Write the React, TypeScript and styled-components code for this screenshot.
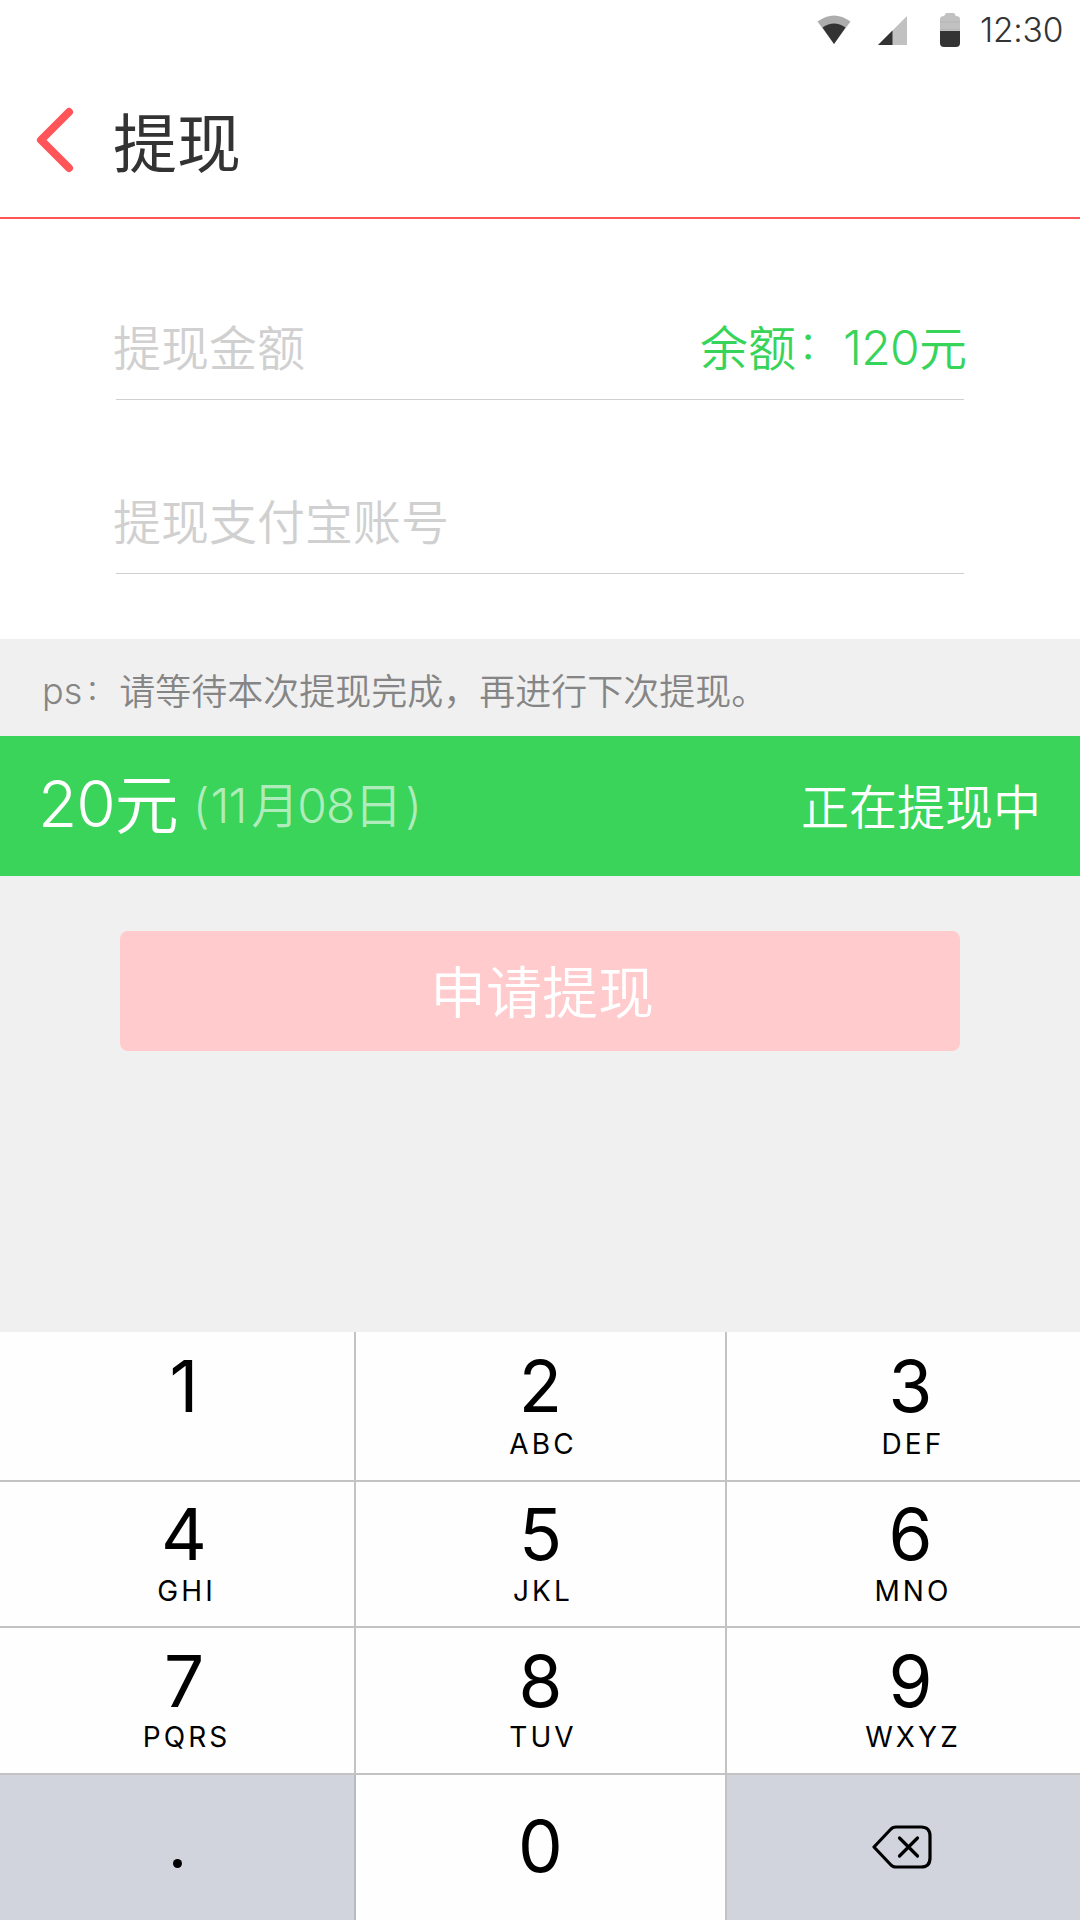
import React from "react";
import styled, { createGlobalStyle } from "styled-components";

const GlobalStyle = createGlobalStyle`
  *, *::before, *::after { box-sizing: border-box; }
  body { margin: 0; background: #fff; }
`;

const Screen = styled.main`
  display: flex;
  flex-direction: column;
  width: 1080px;
  height: 1920px;
  overflow: hidden;
  background: #f0f0f0;
  font-family: Inter, "Noto Sans CJK SC", sans-serif;
  font-weight: 350;
  white-space: nowrap;
`;

const StatusBar = styled.div`
  display: flex;
  justify-content: flex-end;
  align-items: center;
  height: 60px;
  padding-right: 16px;
  background: #fff;
`;

const StatusIcon = styled.svg<{ $gap: number }>`
  display: block;
  margin-right: ${(p) => p.$gap}px;
`;

const Clock = styled.time`
  width: 84px;
  font-size: 33.5px;
  font-weight: 360;
  line-height: 60px;
  letter-spacing: -0.2px;
  color: #333;
`;

const Header = styled.header`
  display: flex;
  height: 159px;
  padding-left: 36px;
  background: #fff;
  border-bottom: 2px solid #ff5558;
`;

const BackButton = styled.button`
  width: 77px;
  height: 66px;
  margin-top: 47px;
  padding: 0;
  border: 0;
  background: none;
`;

const BackIcon = styled.svg`
  display: block;
`;

const Title = styled.h1`
  margin: 0;
  font-size: 64px;
  font-weight: 400;
  line-height: 64px;
  padding-top: 52px;
  color: #333;
`;

const Form = styled.section`
  height: 420px;
  padding: 7px 116px 0;
  background: #fff;
`;

const Field = styled.div`
  display: flex;
  justify-content: space-between;
  height: 174px;
  padding-top: 95px;
  border-bottom: 1px solid #d0d0d0;
  font-size: 48px;
  line-height: 56px;
`;

const Placeholder = styled.span`
  margin-left: -3px;
  color: #d0d0d0;
`;

const Balance = styled.span`
  margin-right: -3px;
  color: #37d45a;
`;

const Latin = styled.span<{ $spacing?: number; $before?: number; $after?: number; $raise?: number }>`
  margin: 0 ${(p) => p.$after ?? 0}px 0 ${(p) => p.$before ?? 0}px;
  letter-spacing: ${(p) => p.$spacing ?? 0}px;
  line-height: 0;
  vertical-align: ${(p) => p.$raise ?? 0}px;
`;

const Colon = styled.span`
  margin: 0 0.185em 0 0.065em;
  font-size: 0.8em;
  line-height: 0;
  vertical-align: 0.177em;
`;

const Note = styled.p`
  height: 97px;
  margin: 0;
  padding: 0 42px;
  font-size: 36px;
  line-height: 106px;
  color: #858585;
`;

const Pending = styled.section`
  display: flex;
  align-items: center;
  height: 140px;
  padding: 0 39px 0 38px;
  background: #39d459;
  color: #fff;
`;

const Amount = styled.strong`
  font-size: 64px;
  font-weight: 350;
  line-height: 136px;
  padding-bottom: 2px;
`;

const DateText = styled.span`
  flex: 1;
  margin-left: 14px;
  font-size: 48px;
  line-height: 140px;
  color: rgba(255, 255, 255, 0.6);
`;

const State = styled.span`
  font-size: 48px;
  line-height: 140px;
  padding-top: 3px;
`;

const Actions = styled.div`
  flex: 1;
  padding: 55px 120px 0;
`;

const SubmitButton = styled.button`
  display: block;
  width: 840px;
  height: 120px;
  padding: 4px 0 0 4px;
  border: 0;
  border-radius: 8px;
  background: #ffcbcd;
  color: #fff;
  font: inherit;
  font-size: 56px;
  line-height: 116px;
`;

const Keypad = styled.section`
  display: grid;
  grid-template-columns: 356px 371px 353px;
  grid-template-rows: 150px 146px 147px 145px;
  background: #fff;
`;

const Key = styled.button<{ $shade?: boolean; $right: boolean; $bottom: boolean; $top: number; $shift: number }>`
  display: flex;
  flex-direction: column;
  align-items: center;
  padding: ${(p) => p.$top}px 0 0 ${(p) => p.$shift}px;
  border: 0 solid ${(p) => (p.$shade ? "#b9bac1" : "#c3c3c4")};
  border-right-width: ${(p) => (p.$right ? 2 : 0)}px;
  border-bottom-width: ${(p) => (p.$bottom ? 2 : 0)}px;
  background: ${(p) => (p.$shade ? "#d1d4dc" : "#fefefe")};
  color: #000;
  font: inherit;
`;

const KeyDigit = styled.span`
  font-size: 71px;
  font-weight: 400;
  line-height: 60px;
`;

const KeyLetters = styled.span<{ $gap: number }>`
  margin-top: ${(p) => p.$gap}px;
  padding-left: 5px;
  font-size: 28px;
  font-weight: 370;
  line-height: 28px;
  letter-spacing: 3.1px;
`;

const Dot = styled.span`
  width: 9px;
  height: 9px;
  border-radius: 50%;
  background: #000;
`;

const DeleteIcon = styled.svg`
  display: block;
  margin-right: 3px;
`;

interface KeyRow {
  top: number;
  gap: number;
  keys: [string, string][];
}

const ROWS: KeyRow[] = [
  { top: 24, gap: 14, keys: [["1", ""], ["2", "ABC"], ["3", "DEF"]] },
  { top: 22, gap: 13, keys: [["4", "GHI"], ["5", "JKL"], ["6", "MNO"]] },
  { top: 23, gap: 12, keys: [["7", "PQRS"], ["8", "TUV"], ["9", "WXYZ"]] },
];

const SHIFTS = [14, 0, 14];

export default function App() {
  return (
    <Screen>
      <GlobalStyle />
      <StatusBar>
        <StatusIcon $gap={27} width="34" height="30" viewBox="0 0 34 30">
          <path d="M0.5 6.5Q17-5.5 33.500 6.500L17 29Z" fill="#adadad" />
          <path d="M5.500 12.500Q17 4.500 28.500 12.500L17 29Z" fill="#333" />
        </StatusIcon>
        <StatusIcon $gap={33} width="29" height="29" viewBox="0 0 29 29">
          <path d="M29 0V29H0Z" fill="#c1c1c1" />
          <path d="M14.500 14.500V29H0Z" fill="#333" />
        </StatusIcon>
        <StatusIcon $gap={20} width="20" height="34" viewBox="0 0 20 34">
          <path d="M0 18V6Q0 3 4 3L6 0H14L16 3Q20 3 20 6V18Z" fill="#c1c1c1" />
          <path d="M0 9H20M0 16.500H20" stroke="#b5b5b5" />
          <path d="M0 18H20V30Q20 34 16 34H4Q0 34 0 30Z" fill="#333" />
        </StatusIcon>
        <Clock>12:30</Clock>
      </StatusBar>

      <Header>
        <BackButton aria-label="返回">
          <BackIcon width="40" height="66" viewBox="0 0 40 66">
            <path d="M33 5L5 33L33 61" fill="none" stroke="#ff5558" strokeWidth="8" strokeLinecap="round" strokeLinejoin="round" />
          </BackIcon>
        </BackButton>
        <Title>提现</Title>
      </Header>

      <Form>
        <Field>
          <Placeholder>提现金额</Placeholder>
          <Balance>余额<Colon>：</Colon><Latin $spacing={-0.7} $before={-1} $raise={1}>120</Latin>元</Balance>
        </Field>
        <Field>
          <Placeholder>提现支付宝账号</Placeholder>
        </Field>
      </Form>

      <Note><Latin $after={1} $raise={1}>ps</Latin><Colon>：</Colon>请等待本次提现完成，再进行下次提现。</Note>

      <Pending>
        <Amount><Latin $spacing={-1} $raise={1}>20</Latin>元</Amount>
        <DateText>
          <Latin $after={1}>(</Latin><Latin $spacing={-1} $after={5}>11</Latin>月<Latin $spacing={-1} $before={-2}>08</Latin>日<Latin $before={3}>)</Latin>
        </DateText>
        <State>正在提现中</State>
      </Pending>

      <Actions>
        <SubmitButton>申请提现</SubmitButton>
      </Actions>

      <Keypad>
        {ROWS.map((row) =>
          row.keys.map(([digit, letters], col) => (
            <Key key={digit} $right={col < 2} $bottom $top={row.top} $shift={SHIFTS[col]}>
              <KeyDigit>{digit}</KeyDigit>
              {letters && <KeyLetters $gap={row.gap}>{letters}</KeyLetters>}
            </Key>
          ))
        )}
        <Key $shade $right $bottom={false} $top={84} $shift={0} aria-label=".">
          <Dot />
        </Key>
        <Key $right $bottom={false} $top={41} $shift={0}>
          <KeyDigit>0</KeyDigit>
        </Key>
        <Key $shade $right={false} $bottom={false} $top={50} $shift={0} aria-label="删除">
          <DeleteIcon width="60" height="44" viewBox="0 0 60 44" fill="none" stroke="#000" strokeWidth="3.200" strokeLinecap="round" strokeLinejoin="round">
            <path d="M2 22L18.500 4.500Q20.500 2 24 2H49Q58 2 58 11V33Q58 42 49 42H24Q20.500 42 18.500 39.500Z" />
            <path d="M27.500 13L45.500 31M45.500 13L27.500 31" />
          </DeleteIcon>
        </Key>
      </Keypad>
    </Screen>
  );
}
